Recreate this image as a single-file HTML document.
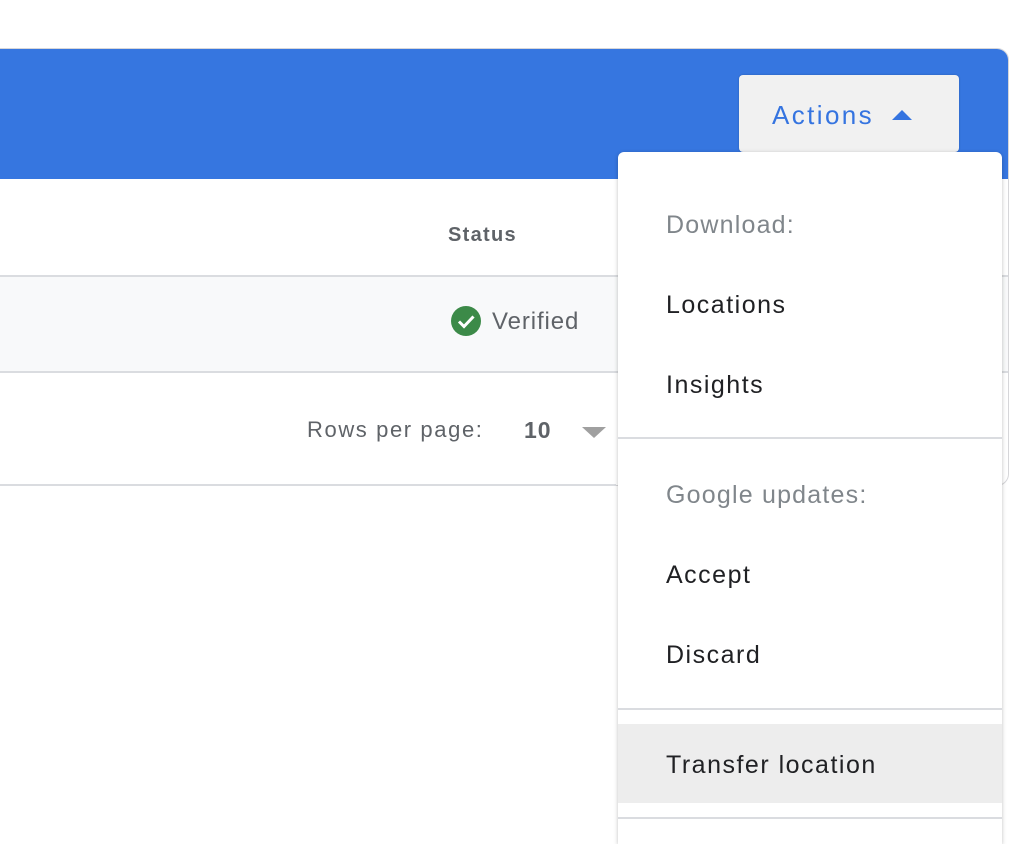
<!DOCTYPE html>
<html style="overflow:hidden;height:844px"><head><style>
body{margin:0;width:1026px;height:844px;background:#fff;position:relative;overflow:hidden;font-family:"Liberation Sans",Arial,sans-serif}
.a{position:absolute}
.card{left:-20px;top:48px;width:1027px;height:436px;border:1.5px solid #d6d6d9;border-radius:12px;background:#fff;overflow:hidden}
.hdr{left:0;top:0;right:0;height:130px;background:#3676e0}
.t{white-space:nowrap;line-height:1}
.menu{left:618px;top:152px;width:384px;height:692px;background:#fff;border-radius:6px 6px 0 0;box-shadow:0 1px 4px rgba(0,0,0,.25)}
.mi{left:48px;font-size:25px;color:#202124;letter-spacing:1.5px}
.mh{left:48px;font-size:25px;color:#80868b;letter-spacing:1.2px}
.div{left:0;width:384px;height:2px;background:#dadce0}
</style></head><body>
<div class="a card">
 <div class="a hdr"></div>
 <div class="a" style="left:0;right:0;top:226px;height:94px;background:#f8f9fa;border-top:2px solid #dadce0;border-bottom:2px solid #dadce0"></div>
</div>
<div class="a" style="left:0;top:484px;width:616px;height:2px;background:#dadce0"></div>
<div class="a t" style="left:448px;top:225px;font-size:20px;font-weight:bold;color:#5f6368;letter-spacing:1.3px">Status</div>
<svg class="a" style="left:451px;top:306px" width="30" height="30" viewBox="0 0 30 30"><circle cx="15" cy="15" r="15" fill="#3c8a48"/><path d="M8 15.5l5 5 9.5-10" stroke="#fff" stroke-width="3" fill="none"/></svg>
<div class="a t" style="left:492px;top:310px;font-size:24px;color:#5f6368;letter-spacing:0.9px">Verified</div>
<div class="a t" style="left:307px;top:419px;font-size:22px;color:#5f6368;letter-spacing:1.6px">Rows per page:</div>
<div class="a t" style="left:524px;top:419px;font-size:23px;font-weight:bold;color:#5f6368;letter-spacing:1px">10</div>
<svg class="a" style="left:582px;top:427px" width="24" height="12"><path d="M0 0h24L12 11z" fill="#a0a0a0"/></svg>
<div class="a" style="left:739px;top:75px;width:220px;height:77px;background:#f1f1f1;border-radius:4px;box-shadow:0 0 2px rgba(0,0,0,.2)">
 <div class="a t" style="left:33px;top:27px;font-size:26px;color:#3574e0;letter-spacing:2.4px">Actions</div>
 <svg class="a" style="left:153px;top:35px" width="20" height="11"><path d="M0 10L10 0l10 10z" fill="#3574e0"/></svg>
</div>
<div class="a menu">
 <div class="a t mh" style="top:61px">Download:</div>
 <div class="a t mi" style="top:141px">Locations</div>
 <div class="a t mi" style="top:221px">Insights</div>
 <div class="a div" style="top:285px"></div>
 <div class="a t mh" style="top:331px">Google updates:</div>
 <div class="a t mi" style="top:411px">Accept</div>
 <div class="a t mi" style="top:491px">Discard</div>
 <div class="a div" style="top:556px"></div>
 <div class="a" style="left:0;top:572px;width:384px;height:79px;background:#ededed"></div>
 <div class="a t mi" style="top:601px">Transfer location</div>
 <div class="a div" style="top:665px"></div>
</div>
</body></html>
